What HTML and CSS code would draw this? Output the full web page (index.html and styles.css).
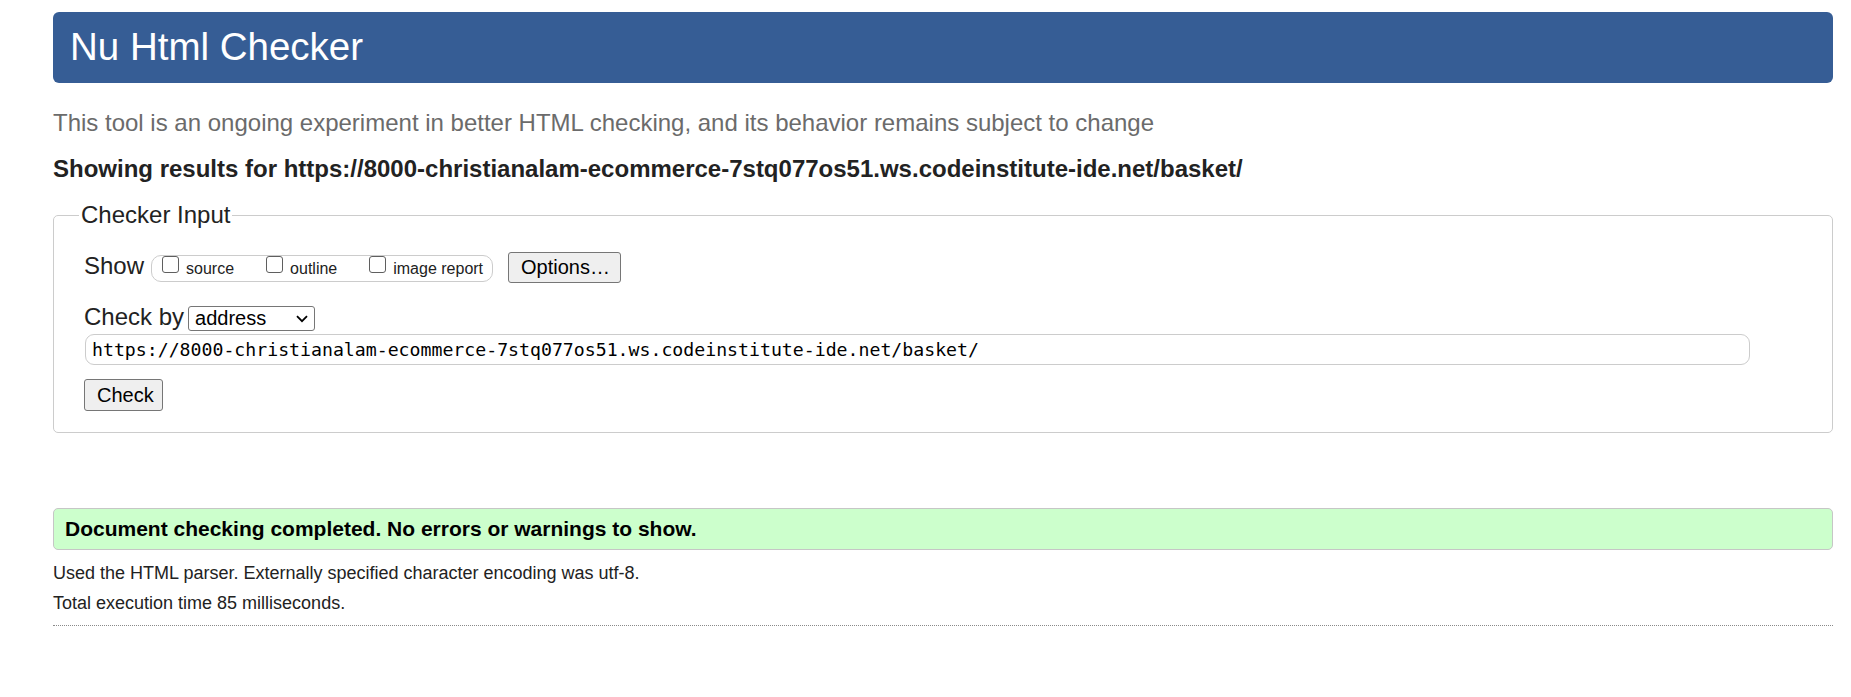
FILE: index.html
```html
<!DOCTYPE html>
<html lang="en">
<head>
<meta charset="utf-8">
<title>Nu Html Checker</title>
<link rel="stylesheet" href="styles.css">
</head>
<body>
<div class="page">
  <h1 class="title">Nu Html Checker</h1>
  <p class="intro">This tool is an ongoing experiment in better HTML checking, and its behavior remains subject to change</p>
  <p class="showing">Showing results for https://8000-christianalam-ecommerce-7stq077os51.ws.codeinstitute-ide.net/basket/</p>
  <form class="checker">
    <fieldset class="fs">
      <legend class="legend">Checker Input</legend>
      <div class="row row-show">
        <span class="label">Show</span>
        <div class="toggles">
          <label class="toggle"><input type="checkbox" class="cb"><span>source</span></label>
          <label class="toggle"><input type="checkbox" class="cb"><span>outline</span></label>
          <label class="toggle"><input type="checkbox" class="cb"><span>image report</span></label>
        </div>
        <button type="button" class="btn btn-options">Options…</button>
      </div>
      <div class="row row-by">
        <span class="label">Check by</span>
        <span class="sel-wrap">
          <select class="sel"><option>address</option></select>
          <svg class="chev" width="12" height="8" viewBox="0 0 12 8" aria-hidden="true"><path d="M1 1.2 L6 6.2 L11 1.2" fill="none" stroke="#000" stroke-width="1.8"/></svg>
        </span>
      </div>
      <input class="url" type="text" value="https://8000-christianalam-ecommerce-7stq077os51.ws.codeinstitute-ide.net/basket/">
      <div class="row row-check">
        <button type="button" class="btn btn-check">Check</button>
      </div>
    </fieldset>
  </form>
  <p class="success">Document checking completed. No errors or warnings to show.</p>
  <p class="details">Used the HTML parser. Externally specified character encoding was utf-8.</p>
  <p class="details">Total execution time 85 milliseconds.</p>
  <hr class="rule">
</div>
</body>
</html>
```

FILE: styles.css
```css
html, body {
  margin: 0;
  padding: 0;
  background: #ffffff;
}

body {
  font-family: "Liberation Sans", Arial, sans-serif;
  color: #222222;
}

.page {
  margin: 0 18px 0 53px;
  padding-top: 12px;
}

.title {
  margin: 0;
  background: #365d95;
  color: #ffffff;
  font-weight: normal;
  font-size: 38.5px;
  line-height: 46px;
  padding: 12px 17px 13px;
  border-radius: 6px;
}

.intro {
  margin: 26px 0 0;
  font-size: 24px;
  line-height: 28px;
  color: #6b6b6b;
}

.showing {
  margin: 18px 0 0;
  font-size: 24px;
  line-height: 28px;
  font-weight: bold;
  color: #222222;
}

.checker {
  margin: 20px 0 0;
}

.fs {
  margin: 0;
  border: 1px solid #cccccc;
  border-radius: 5px;
  padding: 25px 30px 21px;
  min-width: 0;
}

.legend {
  font-size: 24px;
  line-height: 24px;
  padding: 0 2px;
  margin-left: -5px;
  color: #222222;
}

.row {
  display: flex;
  align-items: baseline;
}

.label {
  font-size: 24px;
  line-height: 26px;
}

.row-show .label {
  margin-right: 7px;
}

.toggles {
  display: flex;
  align-items: baseline;
  border: 1px solid #cccccc;
  border-radius: 10px;
  padding: 0 9px 0 9px;
  height: 25px;
  font-size: 16px;
}

.toggle {
  display: flex;
  align-items: baseline;
  line-height: 25px;
  margin-right: 31px;
}

.toggle:last-child {
  margin-right: 0;
}

.cb {
  appearance: none;
  -webkit-appearance: none;
  width: 17px;
  height: 17px;
  margin: 0 7px 0 1px;
  border: 1px solid #5f5f5f;
  border-radius: 3px;
  background: #ffffff;
  position: relative;
  top: -1px;
}

.btn {
  font-family: "Liberation Sans", Arial, sans-serif;
  font-size: 20px;
  color: #000000;
  background: #efefef;
  border: 1px solid #767676;
  border-radius: 3px;
  height: 31px;
  padding: 0 12px;
}

.btn-options {
  margin-left: 15px;
  width: 113px;
}

.row-by {
  margin-top: 21px;
}

.row-by .label {
  margin-right: 4px;
}

.sel-wrap {
  position: relative;
  display: inline-block;
}

.sel {
  appearance: none;
  -webkit-appearance: none;
  font-family: "Liberation Sans", Arial, sans-serif;
  font-size: 20px;
  line-height: 23px;
  color: #000000;
  width: 127px;
  height: 25px;
  border: 1px solid #767676;
  border-radius: 3px;
  background: #ffffff;
  padding: 0 2px 0 6px;
}

.chev {
  position: absolute;
  right: 7px;
  top: 9px;
  pointer-events: none;
}

.url {
  display: block;
  box-sizing: border-box;
  margin: 3px 0 0 1px;
  width: calc(100% - 53px);
  height: 31px;
  border: 1px solid #cccccc;
  border-radius: 9px;
  padding: 0 6px;
  font-family: "DejaVu Sans Mono", "Liberation Mono", monospace;
  font-size: 18.2px;
  color: #000000;
  background: #ffffff;
}

.row-check {
  margin-top: 14px;
}

.btn-check {
  width: 79px;
  height: 32px;
}

.success {
  margin: 75px 0 0;
  background: #ccffcc;
  border: 1px solid #c6c6c6;
  border-radius: 5px;
  padding: 0 11px;
  height: 40px;
  line-height: 40px;
  font-size: 21px;
  font-weight: bold;
  color: #000000;
}

.details {
  margin: 0;
  font-size: 18px;
  line-height: 30px;
  color: #222222;
}

.success + .details {
  margin-top: 8px;
}

.rule {
  margin: 7px 0 0;
  border: 0;
  border-top: 1px dotted #8a8a8a;
  height: 0;
}
```
